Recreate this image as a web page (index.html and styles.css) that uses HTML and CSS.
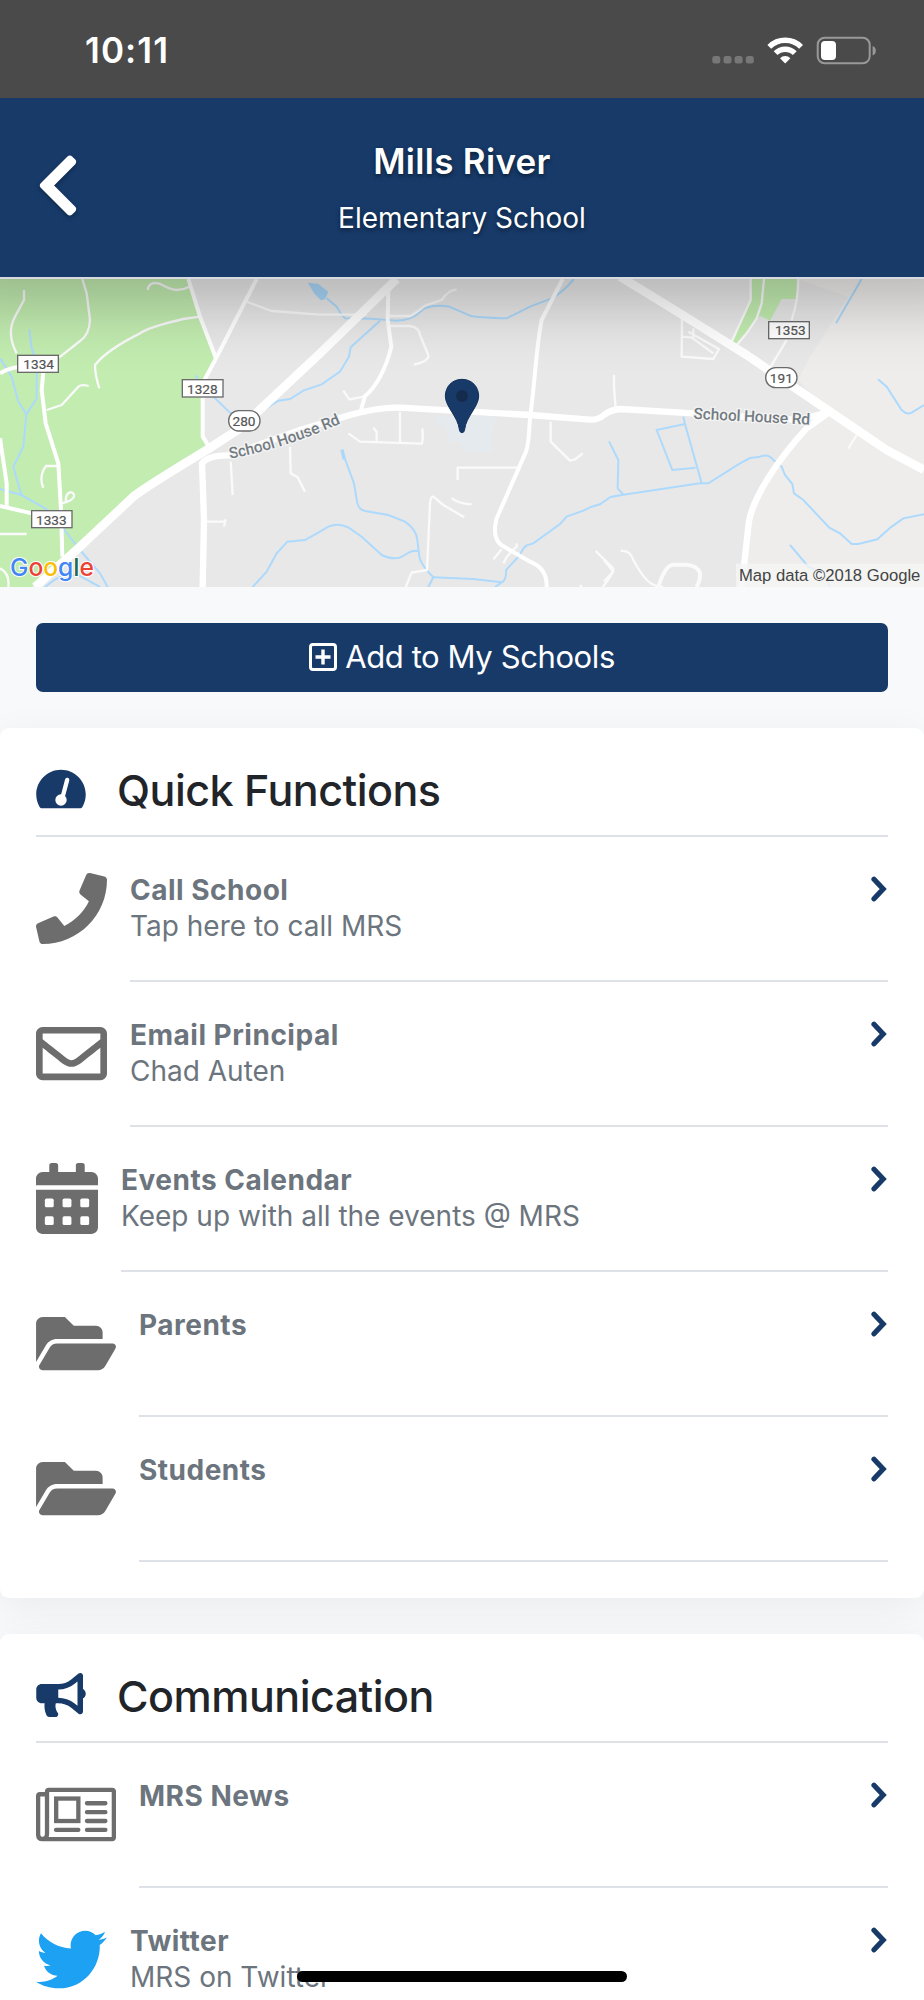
FILE: index.html
```
<!DOCTYPE html>
<html lang="en">
<head>
    <meta charset="UTF-8">
    <meta name="viewport" content="width=device-width, initial-scale=1.0">
    <title>Mills River Elementary School</title>
    <link rel="stylesheet" href="styles.css">
</head>
<body>
    <!-- shared icons -->
    <svg class="sprite">
        <symbol id="chevron" viewBox="0 0 16 26">
            <path d="M3 3.2L12.2 13L3 22.8" fill="none" stroke="currentColor" stroke-width="5.2" stroke-linecap="round"/>
        </symbol>
        <symbol id="folder" viewBox="0 0 576 512">
            <path d="M572.694 292.093L500.27 416.248A63.997 63.997 0 0 1 444.989 448H45.025c-18.523 0-30.064-20.093-20.731-36.093l72.424-124.155A64 64 0 0 1 152 256h399.964c18.523 0 30.064 20.093 20.73 36.093zM152 224h328v-48c0-26.51-21.49-48-48-48H272l-64-64H48C21.49 64 0 85.49 0 112v278.046l69.077-118.418C86.214 242.25 117.989 224 152 224z"/>
        </symbol>
    </svg>

    <div class="status-bar">
        <span class="time">10:11</span>
        <svg class="status-icons" width="166" height="30" viewBox="711 35 166 30">
            <g fill="#777">
                <rect x="712.3" y="56" width="8" height="7.6" rx="2.5"/>
                <rect x="723.5" y="56" width="8" height="7.6" rx="2.5"/>
                <rect x="734.6" y="56" width="8" height="7.6" rx="2.5"/>
                <rect x="745.8" y="56" width="8" height="7.6" rx="2.5"/>
            </g>
            <g fill="none" stroke="#fff" stroke-width="5.4">
                <path d="M769.3 46.8A22.5 22.5 0 0 1 801.1 46.8"/>
                <path d="M775.6 53.2A13.6 13.6 0 0 1 794.8 53.2"/>
            </g>
            <path d="M785.2 63.6L780 58.2A7.4 7.4 0 0 1 790.4 58.2Z" fill="#fff"/>
            <rect x="817.7" y="37.7" width="52" height="25.6" rx="7" fill="none" stroke="#999" stroke-width="2"/>
            <rect x="821" y="41" width="15" height="19" rx="4" fill="#fff"/>
            <path d="M872.6 46v9.4q3.2-1 3.2-4.7t-3.2-4.7z" fill="#999"/>
        </svg>
    </div>

    <header class="header">
        <svg class="back" viewBox="0 0 320 512"><path d="M34.52 239.03L228.87 44.69c9.37-9.37 24.57-9.37 33.94 0l22.67 22.67c9.36 9.36 9.37 24.52.04 33.9L131.49 256l154.02 154.75c9.34 9.38 9.32 24.54-.04 33.9l-22.67 22.67c-9.37 9.37-24.57 9.37-33.94 0L34.52 272.97c-9.37-9.37-9.37-24.57 0-33.94z"/></svg>
        <div class="header-text">
            <h1>Mills River</h1>
            <p>Elementary School</p>
        </div>
    </header>

    <svg class="map" viewBox="0 27 2772 924">
        <rect y="27" width="2772" height="924" fill="#e8e8e8"/>
        <!-- parks and land -->
        <path d="M0 27H565L600 140L648 265L608 340V500L625 530L420 655L190 860L95 951H0Z" fill="#c2ecb0"/>
        <path d="M2392 27L2545 80L2430 260L2395 330L2485 430L2400 510L2290 640L2240 780L2220 951H2772V27Z" fill="#efedeb"/>
        <path d="M2392 85L2540 80L2450 220L2395 320L2310 270L2370 130Z" fill="#e8e8e8"/>
        <path d="M2252 27H2390V87H2345L2310 152L2280 137L2210 222L2195 215L2250 90Z" fill="#c2ecb0"/>
        <path d="M1305 440L1485 435L1477 545H1390L1380 515H1345L1335 470L1310 462Z" fill="#e4eaee"/>

        <!-- water -->
        <g class="water">
            <path d="M88 178L94 230L110 280V385L79 433L70 530L40 590L64 675"/>
            <path d="M0 265L35 320L55 395L79 433"/>
            <path d="M0 657L64 675L140 718L190 775L240 840L300 910L323 951"/>
            <path d="M135 951L160 932L190 915L240 918L300 951"/>
            <path d="M588 315L595 335L645 385L690 428L760 440L835 392L870 387L910 362L965 343L1020 305L1047 260L1052 232L1140 152"/>
            <path d="M758 951L800 905L830 850L862 815L915 810L960 785L985 770Q1015 757 1045 772L1085 800L1145 855Q1185 875 1215 855Q1235 840 1255 843"/>
            <path d="M980 85L1010 110L1022 130L1035 145L1115 146L1190 152Q1235 150 1255 130L1275 114Q1310 103 1348 110L1410 137Q1430 142 1520 145L1550 130L1590 110L1655 85Q1690 65 1722 27"/>
            <path d="M1025 540L1062 640L1072 700Q1078 722 1100 724L1165 735L1215 755Q1250 780 1252 810L1258 860Q1262 885 1300 922L1285 951"/>
            <path d="M1300 922L1420 927L1505 937Q1520 930 1518 900L1560 855Q1568 835 1580 826L1600 820L1680 762L1700 740L1750 722L1775 710L1800 703L1832 681L1870 674L2100 640H2125L2220 580L2250 564L2280 560Q2305 550 2320 570L2345 590L2355 615L2377 642L2382 670L2410 690L2488 773L2520 790L2555 822L2575 822L2632 808L2672 772L2710 745L2772 733"/>
            <path d="M1485 951L1505 937"/>
            <path d="M1827 514L1855 570L1853 655L1870 674"/>
            <path d="M2050 440L2055 462L1970 480L2017 600L2087 593M2055 462L2105 640"/>
            <path d="M2585 27L2508 160M2634 328L2660 350L2705 420Q2720 435 2735 428L2772 405M2370 825L2425 890L2470 910L2490 951"/>
        </g>
        <path d="M924 38L955 42L985 65L975 88L962 91L942 70ZM1021 540L1031 538L1037 565L1028 570Z" fill="#a9d8fb"/>

        <!-- side streets -->
        <g class="street">
            <path d="M72 60V90L45 140Q18 190 50 250"/>
            <path d="M247 27L260 70L270 150Q268 195 240 213L178 262"/>
            <path d="M443 60Q445 35 475 40C495 45 520 75 568 50"/>
            <path d="M600 140L550 147Q450 170 420 190Q320 240 285 285Q285 315 298 355"/>
            <path d="M140 420L185 405L235 350Q245 342 266 348M175 588H138Q115 620 130 653M185 700Q225 690 222 675C215 655 190 675 200 698M0 792H80M0 895Q30 910 25 951"/>
            <path d="M692 575L698 675M870 530L872 610L893 622L915 665M620 755H675M677 748L672 770"/>
            <path d="M740 95L815 123L960 134L1100 134M1165 138H1230Q1250 128 1275 107L1325 90Q1345 60 1370 59M1170 168H1230Q1258 173 1260 195L1285 255Q1290 272 1242 284"/>
            <path d="M1030 362L1048 388L1092 380M1045 490L1080 515L1265 521Q1270 515 1267 475M1120 473L1130 485V515M1200 425V518"/>
            <path d="M1555 593H1373V630M1355 684Q1370 700 1415 703M1393 742L1330 705L1300 680Q1292 678 1290 700L1281 900L1235 908L1217 951"/>
            <path d="M1480 868L1505 838M1510 880Q1520 855 1550 830V820M1652 455V515L1710 572L1725 568L1748 550M1842 315V350L1847 415M1787 843L1840 895Q1842 910 1808 951M1740 951L1745 945"/>
            <path d="M2046 145L2045 260L2140 267L2157 237L2065 185M2045 200L2075 203L2140 250M2080 175V203M2575 487L2545 535"/>
            <path d="M1862 843Q1890 840 1900 870C1930 925 1950 950 1990 951M1812 870L1840 905L1812 935"/>
        </g>
        <path d="M1975 951Q1995 885 2020 884H2060C2110 890 2105 920 2090 951" class="street loop"/>

        <!-- roads -->
        <g class="road">
            <path d="M0 310Q30 292 60 290M130 305L125 360L137 460L175 580L183 720L187 860M0 708L95 730M0 505L20 640V710"/>
            <path d="M565 27L600 140L648 265L770 27M648 265L608 340V500L630 535"/>
            <path d="M1165 60L1163 150L1174 230C1160 290 1130 350 1095 378L1083 420"/>
            <path d="M1688 27L1625 150C1610 220 1605 330 1592 430C1585 480 1590 510 1578 545L1490 745C1478 790 1490 815 1505 826L1590 875Q1642 895 1640 951"/>
        </g>
        <g class="street">
            <path d="M2252 27V90L2195 215M2292 27L2285 100L2270 145L2240 190L2210 225M2395 27Q2395 90 2375 150M2360 210L2312 290"/>
        </g>
        <g class="highway">
            <path d="M608 951L612 750L606 580Q625 555 690 556L900 480L1050 435Q1140 410 1200 413L1590 435L1770 449Q1795 450 1812 435Q1830 420 1860 417L2080 430L2400 450L2490 425"/>
            <path d="M2490 425L2420 475C2340 560 2250 690 2245 770L2225 951"/>
        </g>
        <g class="highway big">
            <path d="M105 951L240 830L400 680Q430 655 620 540L720 475L960 250L1190 27"/>
            <path d="M1860 20L2040 130L2240 255L2490 425L2660 540L2772 600"/>
        </g>

        <!-- road signs -->
        <g class="shield">
            <rect x="53" y="256" width="122" height="51"/><text x="116" y="297">1334</text>
            <rect x="547" y="329" width="122" height="52"/><text x="607" y="371">1328</text>
            <rect x="95" y="722" width="121" height="51"/><text x="154" y="764">1333</text>
            <rect x="2306" y="155" width="122" height="51"/><text x="2371" y="196">1353</text>
            <rect x="686" y="422" width="94" height="61" rx="30"/><text x="732" y="468">280</text>
            <rect x="2297" y="293" width="94" height="60" rx="30"/><text x="2344" y="338">191</text>
        </g>
        <path id="streetName" d="M690 566Q860 535 1045 450" fill="none"/>
        <text class="street-name"><textPath href="#streetName" textLength="350">School House Rd</textPath></text>
        <text class="street-name" x="2080" y="446" textLength="350" transform="rotate(3 2080 446)">School House Rd</text>

        <text class="google" x="30" y="919" textLength="252" lengthAdjust="spacingAndGlyphs"><tspan fill="#4285f4">G</tspan><tspan fill="#ea4335">o</tspan><tspan fill="#fbbc05">o</tspan><tspan fill="#4285f4">g</tspan><tspan fill="#1c6a50">l</tspan><tspan fill="#ea4335">e</tspan></text>

        <rect x="2208" y="881" width="564" height="70" fill="#f5f5f5" opacity=".8"/>
        <text class="copyright" x="2217" y="932" textLength="544">Map data ©2018 Google</text>

        <!-- school pin -->
        <path d="M1386 328C1357 328 1336 350 1336 378C1336 410 1374 440 1378 478Q1379 488 1386 488T1394 478C1398 440 1436 410 1436 378C1436 350 1415 328 1386 328Z" fill="#173a69" stroke="#12305a" stroke-width="3"/>
        <circle cx="1386" cy="378" r="18" fill="#142b4d"/>
    </svg>

    <div class="add-wrap">
        <a class="add-button">
            <svg width="28" height="28" viewBox="0 0 28 28" fill="none" stroke="#fff">
                <rect x="1.5" y="1.5" width="25" height="25" rx="2.5" stroke-width="3"/>
                <path d="M14 6.5v15M6.5 14h15" stroke-width="3.4"/>
            </svg>
            <span>Add to My Schools</span>
        </a>
    </div>

    <section class="card">
        <h2 class="card-title">
            <svg viewBox="0 0 576 512">
                <path d="M288 32C128.94 32 0 160.94 0 320c0 52.8 14.25 102.26 39.06 144.8 5.61 9.62 16.3 15.2 27.44 15.2h443c11.14 0 21.83-5.58 27.44-15.2C561.75 422.26 576 372.8 576 320c0-159.06-128.94-288-288-288z"/>
                <path d="M360 150L300 375" stroke="#fff" stroke-width="50" stroke-linecap="round"/>
                <circle cx="288" cy="384" r="66" fill="#fff"/>
            </svg>
            <span>Quick Functions</span>
        </h2>
        <a class="item">
            <svg class="icon" viewBox="0 0 512 512"><path d="M493.4 24.6l-104-24c-11.3-2.6-22.9 3.3-27.5 13.9l-48 112c-4.2 9.8-1.4 21.3 6.9 28l60.6 49.6c-36 76.7-98.9 140.5-177.2 177.2l-49.6-60.6c-6.8-8.3-18.2-11.1-28-6.9l-112 48C3.9 366.5-2 378.1.6 389.4l24 104C27.1 504.2 36.7 512 48 512c256.1 0 464-207.5 464-464 0-11.2-7.7-20.9-18.6-23.4z"/></svg>
            <div class="item-body">
                <div><h3>Call School</h3><p>Tap here to call MRS</p></div>
                <svg class="chevron"><use href="#chevron"/></svg>
            </div>
        </a>
        <a class="item">
            <svg class="icon" viewBox="0 0 512 512"><path d="M464 64H48C21.49 64 0 85.49 0 112v288c0 26.51 21.49 48 48 48h416c26.51 0 48-21.49 48-48V112c0-26.51-21.49-48-48-48zm0 48v40.805c-22.422 18.259-58.168 46.651-134.587 106.49-16.841 13.247-50.201 45.072-73.413 44.701-23.208.375-56.579-31.459-73.413-44.701C106.18 199.465 70.425 171.067 48 152.805V112h416zM48 400V214.398c22.914 18.251 55.409 43.862 104.938 82.646 21.857 17.205 60.134 55.186 103.062 54.955 42.717.231 80.509-37.199 103.053-54.947 49.528-38.783 82.032-64.401 104.947-82.653V400H48z"/></svg>
            <div class="item-body">
                <div><h3>Email Principal</h3><p>Chad Auten</p></div>
                <svg class="chevron"><use href="#chevron"/></svg>
            </div>
        </a>
        <a class="item">
            <svg class="icon narrow" viewBox="0 0 448 512">
                <path d="M0 464c0 26.5 21.5 48 48 48h352c26.5 0 48-21.5 48-48V192H0v272zM400 64h-48V16c0-8.8-7.2-16-16-16h-32c-8.8 0-16 7.2-16 16v48H160V16c0-8.8-7.2-16-16-16h-32c-8.8 0-16 7.2-16 16v48H48C21.5 64 0 85.5 0 112v48h448v-48c0-26.5-21.5-48-48-48z"/>
                <g fill="#fff">
                    <rect x="64" y="256" width="64" height="64" rx="12"/><rect x="192" y="256" width="64" height="64" rx="12"/><rect x="320" y="256" width="64" height="64" rx="12"/>
                    <rect x="64" y="384" width="64" height="64" rx="12"/><rect x="192" y="384" width="64" height="64" rx="12"/><rect x="320" y="384" width="64" height="64" rx="12"/>
                </g>
            </svg>
            <div class="item-body">
                <div><h3>Events Calendar</h3><p>Keep up with all the events @ MRS</p></div>
                <svg class="chevron"><use href="#chevron"/></svg>
            </div>
        </a>
        <a class="item">
            <svg class="icon wide"><use href="#folder"/></svg>
            <div class="item-body">
                <div><h3>Parents</h3></div>
                <svg class="chevron"><use href="#chevron"/></svg>
            </div>
        </a>
        <a class="item">
            <svg class="icon wide"><use href="#folder"/></svg>
            <div class="item-body">
                <div><h3>Students</h3></div>
                <svg class="chevron"><use href="#chevron"/></svg>
            </div>
        </a>
    </section>

    <section class="card last">
        <h2 class="card-title">
            <svg viewBox="0 0 576 512"><path d="M576 240c0-23.63-12.95-44.04-32-55.12V32.01C544 23.26 537.02 0 512 0c-7.12 0-14.19 2.38-19.98 7.02l-85.03 68.03C364.28 109.19 310.66 128 256 128H64c-35.35 0-64 28.65-64 64v96c0 35.35 28.65 64 64 64h33.7c-1.39 10.48-2.18 21.14-2.18 32 0 39.77 9.26 77.35 25.56 110.94 5.19 10.69 16.52 17.06 28.4 17.06h74.28c26.05 0 41.69-29.84 25.9-50.56-16.4-21.52-26.15-48.36-26.15-77.44 0-11.11 1.62-21.79 4.41-32H256c54.66 0 108.28 18.81 150.98 52.95l85.03 68.03a32.023 32.023 0 0 0 19.98 7.02c24.92 0 32-22.78 32-32V295.13C563.05 284.04 576 263.63 576 240zm-96 141.42l-33.05-26.44C392.95 311.78 325.12 288 256 288v-96c69.12 0 136.95-23.78 190.95-66.98L480 98.58v282.84z"/></svg>
            <span>Communication</span>
        </h2>
        <a class="item">
            <svg class="icon wide" viewBox="0 0 576 512">
                <g fill="none" stroke="#6d6d6d" stroke-width="31" stroke-linecap="round">
                    <path d="M79 395V92Q79 79 93 79H548Q561 79 561 92V420Q561 433 548 433H47Q15 433 15 400V124Q15 110 28 110H79M79 395Q79 430 47 433"/>
                    <rect x="145" y="141" width="160" height="162"/>
                    <path d="M367 175H500M367 239H500M367 303H500M367 367H500M144 367H305"/>
                </g>
            </svg>
            <div class="item-body">
                <div><h3>MRS News</h3></div>
                <svg class="chevron"><use href="#chevron"/></svg>
            </div>
        </a>
        <a class="item">
            <svg class="icon twitter" viewBox="0 0 512 512"><path d="M459.37 151.716c.325 4.548.325 9.097.325 13.645 0 138.72-105.583 298.558-298.558 298.558-59.452 0-114.68-17.219-161.137-47.106 8.447.974 16.568 1.299 25.34 1.299 49.055 0 94.213-16.568 130.274-44.832-46.132-.975-84.792-31.188-98.112-72.772 6.498.974 12.995 1.624 19.818 1.624 9.421 0 18.843-1.3 27.614-3.573-48.081-9.747-84.143-51.98-84.143-102.985v-1.299c13.969 7.797 30.214 12.67 47.431 13.319-28.264-18.843-46.781-51.005-46.781-87.391 0-19.492 5.197-37.36 14.294-52.954 51.655 63.675 129.3 105.258 216.365 109.807-1.624-7.797-2.599-15.918-2.599-24.04 0-57.828 46.782-104.934 104.934-104.934 30.213 0 57.502 12.67 76.67 33.137 23.715-4.548 46.456-13.32 66.599-25.34-7.798 24.366-24.366 44.833-46.132 57.827 21.117-2.273 41.584-8.122 60.426-16.243-14.292 20.791-32.161 39.308-52.628 54.253z"/></svg>
            <div class="item-body">
                <div><h3>Twitter</h3><p>MRS on Twitter</p></div>
                <svg class="chevron"><use href="#chevron"/></svg>
            </div>
        </a>
    </section>

    <div class="home-indicator"></div>
</body>
</html>
```

FILE: styles.css
```
* {
    box-sizing: border-box;
}
html {
    height: 2000px;
    overflow: hidden;
}
body {
    margin: 0;
    height: 2000px;
    overflow: hidden;
    position: relative;
    background: #f8f9fb;
    font-family: Inter, "Liberation Sans", sans-serif;
    color: #212529;
}
h1, h2, h3, p {
    margin: 0;
}
svg {
    display: block;
    flex: none;
}
.sprite {
    display: none;
}

/* status bar */
.status-bar {
    position: relative;
    z-index: 2;
    height: 98px;
    padding: 0 47px 0 85px;
    display: flex;
    justify-content: space-between;
    background: #4a4a4a;
    color: #fff;
}
.time {
    font-size: 35px;
    font-weight: 600;
    line-height: 101px;
    letter-spacing: 1.1px;
}
.status-icons {
    margin-top: 35px;
}

/* header */
.header {
    position: relative;
    z-index: 1;
    height: 181px;
    padding: 0 36px;
    display: flex;
    align-items: center;
    background: #173a69;
    border-bottom: 2px solid #d6dae0;
    box-shadow: 0 -34px 60px 60px rgba(0, 0, 0, .23);
    color: #fff;
    text-shadow: 0 2px 4px rgba(0, 0, 0, .5);
}
.back {
    width: 44px;
    height: 71px;
    margin-top: -5px;
    fill: #fff;
    filter: drop-shadow(0 2px 2px rgba(0, 0, 0, .3));
}
.header-text {
    flex: 1;
    padding: 3px 44px 0 0;
    text-align: center;
}
.header h1 {
    font-size: 35px;
    font-weight: 600;
    line-height: 42px;
    letter-spacing: .3px;
}
.header p {
    margin-top: 15px;
    font-size: 28px;
    line-height: 42px;
}

/* map */
.map {
    width: 924px;
    height: 308px;
    font-family: Roboto, sans-serif;
}
.map .water {
    fill: none;
    stroke: #addafc;
    stroke-width: 6;
}
.map .street {
    fill: none;
    stroke: #fafafa;
    stroke-width: 7;
    stroke-linejoin: round;
}
.map .loop {
    stroke-width: 12;
}
.map .road {
    fill: none;
    stroke: #fff;
    stroke-width: 12;
}
.map .highway {
    fill: none;
    stroke: #fff;
    stroke-width: 19;
    stroke-linejoin: round;
}
.map .big {
    stroke-width: 26;
}
.shield rect {
    fill: #fff;
    stroke: #6b6b6b;
    stroke-width: 4;
}
.shield text {
    fill: #555;
    font-size: 41px;
    text-anchor: middle;
    stroke: #555;
    stroke-width: .6;
}
.street-name {
    fill: #737b82;
    font-size: 47px;
    font-weight: 500;
    stroke: #f4f4f4;
    stroke-width: 8;
    paint-order: stroke;
}
.google {
    font-family: Inter, sans-serif;
    font-size: 74px;
    font-weight: 500;
    stroke: #fff;
    stroke-width: 6;
    paint-order: stroke;
}
.copyright {
    fill: #444;
    font-family: "Liberation Sans", sans-serif;
    font-size: 50px;
}

/* add button */
.add-wrap {
    padding: 36px 36px 36px;
}
.add-button {
    height: 69px;
    padding-bottom: 2px;
    display: flex;
    align-items: center;
    justify-content: center;
    gap: 8px;
    border-radius: 7px;
    background: #173a69;
    color: #fff;
    font-size: 31px;
    letter-spacing: -.4px;
}

/* cards */
.card {
    margin-bottom: 36px;
    padding: 0 36px 36px;
    border-radius: 9px;
    background: #fff;
    box-shadow: 0 9px 40px rgba(0, 0, 0, .06);
}
.last {
    height: 366px;
    margin-bottom: 0;
    overflow: hidden;
    border-radius: 9px 9px 0 0;
}
.card-title {
    height: 109px;
    padding-top: 17px;
    display: flex;
    align-items: center;
    border-bottom: 2px solid #dee2e6;
    font-size: 43px;
    font-weight: 500;
    letter-spacing: -.5px;
}
.card-title svg {
    width: 50px;
    height: 44px;
    margin: -2px 31px 0 0;
    fill: #173a69;
}
.item {
    height: 145px;
    display: flex;
}
.icon {
    width: 71px;
    height: 71px;
    margin: 36px 23px 0 0;
    fill: #6d6d6d;
}
.narrow {
    width: 62px;
}
.wide {
    width: 80px;
}
.twitter {
    fill: #1da1f2;
}
.item-body {
    flex: 1;
    padding: 35px 1px 0 0;
    display: flex;
    justify-content: space-between;
    border-bottom: 2px solid #dee2e6;
    color: #6c757d;
    font-size: 28px;
    line-height: 36px;
}
.item-body h3 {
    font-size: 28px;
    font-weight: 700;
    letter-spacing: .5px;
}
.chevron {
    width: 16px;
    height: 26px;
    margin-top: 4px;
    color: #173a69;
}

.home-indicator {
    position: absolute;
    left: 297px;
    top: 1971px;
    width: 330px;
    height: 11px;
    border-radius: 6px;
    background: #000;
}
```
